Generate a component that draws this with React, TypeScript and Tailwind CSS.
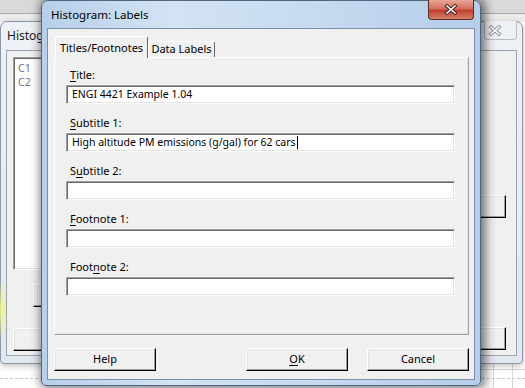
import React from 'react';

const ui = "font-['Noto_Sans',sans-serif] text-[11px] text-black";

function Mn({ children }: { children: React.ReactNode }) {
  return <span className="underline underline-offset-2 decoration-1">{children}</span>;
}

function CloseGlyph({ dark, light }: { dark: string; light: string }) {
  return (
    <svg width="14" height="11" viewBox="0 0 14 11">
      <path d="M3 2 L11 9 M11 2 L3 9" stroke={dark} strokeWidth="3.6" strokeLinecap="square" />
      <path d="M3 2 L11 9 M11 2 L3 9" stroke={light} strokeWidth="1.6" strokeLinecap="square" />
    </svg>
  );
}

function Field({ label, value, cursor }: { label: React.ReactNode; value?: string; cursor?: boolean }) {
  return (
    <div className="flex flex-col">
      <div className="h-[14px] leading-[14px] ml-[4px]">{label}</div>
      <div className="mt-[3px] h-[19px] w-[389px] bg-white border border-t-[#a0a0a0] border-l-[#a0a0a0] border-b-white border-r-white shadow-[inset_1px_1px_0_#696969,inset_-1px_-1px_0_#e3e3e3] flex items-center pl-[5px] leading-none text-[10.5px]">
        <span>{value}</span>
        {cursor && <span className="ml-[1px] w-px h-[13px] bg-black" />}
      </div>
    </div>
  );
}

function Btn({ children, w = 'w-[102px]' }: { children?: React.ReactNode; w?: string }) {
  return (
    <div className={`${w} h-[23px] bg-[#f0f0f0] border border-t-white border-l-white border-r-black border-b-black shadow-[inset_-1px_-1px_0_#a0a0a0,inset_1px_1px_0_#e3e3e3] flex items-center justify-center`}>
      {children}
    </div>
  );
}

export default function App() {
  return (
    <div className={`${ui} relative w-[525px] h-[388px] overflow-hidden bg-white`}>
      {/* application behind */}
      <div className="absolute inset-x-0 top-0 h-[22px] flex flex-col">
        <div className="h-[13px] bg-[#d9d9d9]" />
        <div className="h-px bg-[#a7a7a7]" />
        <div className="flex-1 bg-[#ececec]" />
      </div>
      <div className="absolute left-0 right-0 top-[364px] bottom-0 bg-white flex flex-col">
        <div className="mt-[14px] h-0 border-t border-dashed border-[#c8c8c8]" />
      </div>
      <div className="absolute left-[493px] top-[364px] bottom-0 w-px bg-[#d6d6d6]" />
      <div className="absolute left-[512px] top-[364px] bottom-0 w-px bg-[#d6d6d6]" />
      <div className="absolute left-[481px] right-0 top-[369px] h-px bg-[#d6d6d6]" />

      {/* background window: Histogram */}
      <div className="absolute left-0 top-[21px] w-[523px] h-[343px] rounded-t-[7px] rounded-b-[4px] border border-[#8c98a6] bg-[linear-gradient(180deg,#eef1f5,#e2e8ef)] shadow-[0_2px_6px_rgba(0,0,0,0.25)] flex flex-col">
        <div className="h-[28px] flex items-center pl-[6px] text-[12px] text-[#1a1a1a] relative">
          <span>Histogram</span>
          <div className="absolute right-[5px] top-[-1px] w-[33px] h-[19px] rounded-b-[4px] border border-t-0 border-[#b7bfc9] bg-[#edf0f4] flex items-center pl-[3px]">
            <CloseGlyph dark="#8c939c" light="#ffffff" />
          </div>
        </div>
        <div className="mx-[5px] h-[306px] border border-[#9aa4b0] bg-[#f0f0f0] flex justify-between">
          <div className="flex flex-col pl-[6px] pt-[6px]">
            <div className="w-[160px] h-[213px] bg-white border border-t-[#a0a0a0] border-l-[#a0a0a0] border-b-white border-r-white shadow-[inset_1px_1px_0_#696969,inset_-1px_-1px_0_#e3e3e3] pl-[4px] pt-[3px] text-[#6f6f8c] text-[10.5px] leading-[14px]">
              <div>C1</div>
              <div>C2</div>
            </div>
            <div className="ml-[20px] mt-[14px]">
              <Btn w="w-[90px]" />
            </div>
            <div className="mt-[21px]">
              <Btn w="w-[90px]" />
            </div>
          </div>
          <div className="flex flex-col pr-[10px] pt-[144px]">
            <Btn w="w-[90px]" />
            <div className="mt-[109px]">
              <Btn w="w-[90px]" />
            </div>
          </div>
        </div>
      </div>
      <div className="absolute left-0 top-[280px] w-[5px] h-[60px] bg-[linear-gradient(180deg,rgba(240,245,150,0),rgba(240,245,150,0.9),rgba(240,245,150,0))]" />

      {/* front dialog: Histogram: Labels */}
      <div className="absolute left-[41px] top-0 w-[440px] h-[386px] rounded-t-[7px] rounded-b-[5px] border border-[#4f6580] bg-[linear-gradient(90deg,#b7cfea,#d3e3f4_30%,#c3d8ef_70%,#b5cde8)] shadow-[2px_0_10px_3px_rgba(0,0,0,0.5)] flex flex-col">
        <div className="h-[27px] flex items-center pl-[9px] text-[11.5px] relative">
          <span>Histogram: Labels</span>
          <div className="absolute right-[6px] top-[-1px] w-[46px] h-[20px] rounded-b-[4px] border border-t-0 border-[#5a2a25] bg-[linear-gradient(180deg,#e7a799,#d2705f_45%,#c13f2e_55%,#d6806c)] flex items-center justify-center">
            <CloseGlyph dark="#4b2019" light="#ffffff" />
          </div>
        </div>
        <div className="mx-[5px] h-[352px] border border-[#7d8fa6] bg-[#f0f0f0] flex flex-col pl-[6px] pr-[5px] pt-[7px]">
          {/* tabs */}
          <div className="flex items-end h-[21px]">
            <div className="relative z-10 ml-[1px] w-[93px] h-[22px] -mb-px bg-[#f0f0f0] border border-b-0 border-t-white border-l-white border-r-[#696969] rounded-t-[2px] flex items-start justify-center pt-[3px]">
              Titles/Footnotes
            </div>
            <div className="w-[67px] h-[16px] bg-[#f0f0f0] border border-b-0 border-t-white border-l-white border-r-[#696969] rounded-t-[2px] flex items-center justify-center">
              Data Labels
            </div>
          </div>
          {/* panel */}
          <div className="h-[278px] w-[415px] border border-t-white border-l-white border-r-[#a0a0a0] border-b-[#a0a0a0] shadow-[inset_-1px_-1px_0_#e3e3e3] flex flex-col gap-[12px] pl-[11px] pt-[10px]">
            <Field label={<><Mn>T</Mn>itle:</>} value="ENGI 4421 Example 1.04" />
            <Field label={<><Mn>S</Mn>ubtitle 1:</>} value="High altitude PM emissions (g/gal) for 62 cars" cursor />
            <Field label={<>S<Mn>u</Mn>btitle 2:</>} />
            <Field label={<><Mn>F</Mn>ootnote 1:</>} />
            <Field label={<>Foot<Mn>n</Mn>ote 2:</>} />
          </div>
          {/* buttons */}
          <div className="mt-[13px] flex justify-between w-[415px]">
            <Btn>Help</Btn>
            <div className="flex gap-[19px]">
              <Btn>
                <Mn>O</Mn>K
              </Btn>
              <Btn>Cancel</Btn>
            </div>
          </div>
        </div>
      </div>
    </div>
  );
}
